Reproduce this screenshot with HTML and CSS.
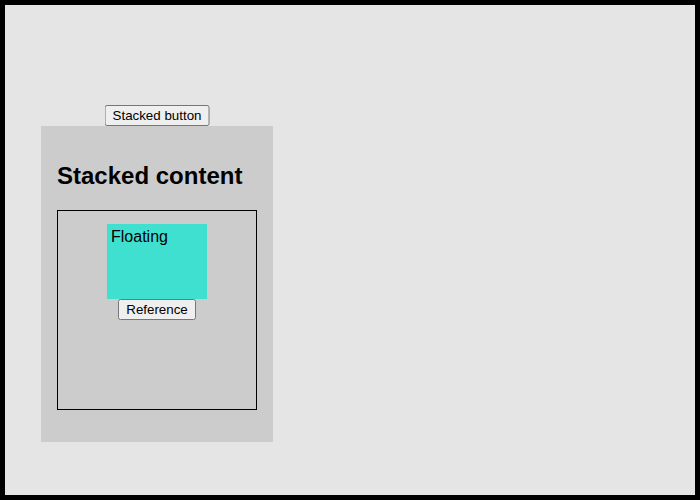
FILE: index.html
```html
<!DOCTYPE html>
<html lang="en">
<head>
    <meta charset="UTF-8">
    <title>Stacked</title>
    <link rel="stylesheet" href="styles.css">
</head>
<body>

<div class="stack">
    <button class="stack-button">Stacked button</button>
    <h2>Stacked content</h2>
    <div class="frame">
        <div class="floating">Floating</div>
        <button>Reference</button>
    </div>
</div>

</body>
</html>
```
FILE: styles.css
```css
html, body {
    height: 100%;
}
body {
    margin: 0;
    box-sizing: border-box;
    border: 5px solid #000;
    background-color: #e5e5e5;
    font-family: "Liberation Sans", Arial, sans-serif;
    padding: 121px 0 0 36px;
}
button {
    font-family: "Liberation Sans", Arial, sans-serif;
    font-size: 13.333px;
}
.stack {
    position: relative;
    width: 200px;
    padding: 16px 16px 32px;
    background-color: #ccc;
}
.stack h2 {
    font-size: 24px;
    margin: 19.92px 0;
}
.stack-button {
    position: absolute;
    bottom: 100%;
    left: 50%;
    transform: translateX(-50%);
    white-space: nowrap;
}
.frame {
    box-sizing: border-box;
    width: 200px;
    height: 200px;
    border: 1px solid #000;
    display: flex;
    flex-direction: column;
    align-items: center;
    padding-top: 13px;
}
.floating {
    box-sizing: border-box;
    width: 100px;
    height: 75px;
    padding: 4px;
    background-color: #40e0d0;
    font-size: 16px;
}
```
